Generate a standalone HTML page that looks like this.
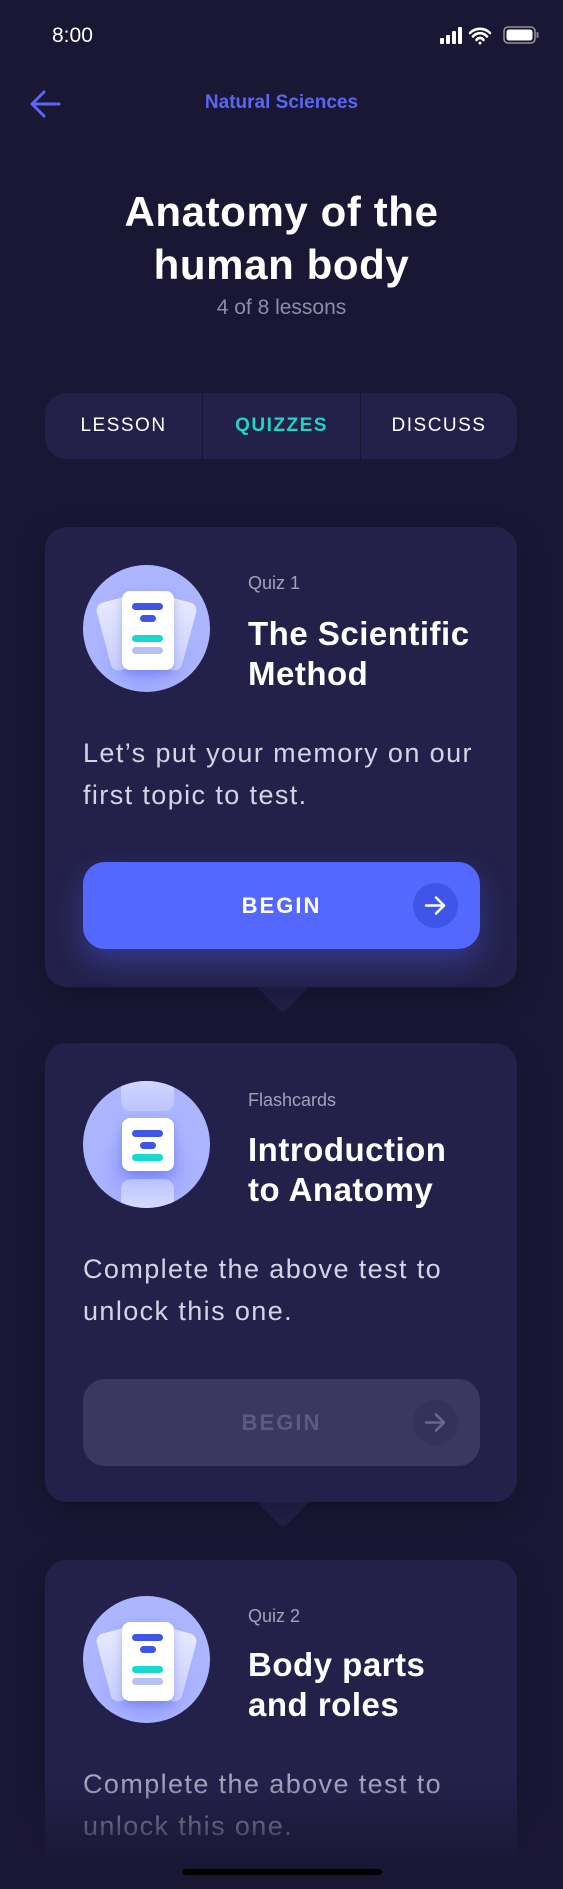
<!DOCTYPE html>
<html style="width:563px;height:1889px;overflow:hidden"><head><meta charset="utf-8"><style>
*{margin:0;padding:0;box-sizing:border-box}
body{width:563px;height:1889px;background:#1a1735;font-family:"Liberation Sans",sans-serif;position:relative;overflow:hidden;color:#fff}
.a{position:absolute}
.card{position:absolute;left:45px;width:472px;background:#23214a;border-radius:22px;box-shadow:0 10px 30px rgba(0,0,0,.25)}
.tri{position:absolute;left:263px;width:40px;height:40px;background:#23214a;transform:rotate(45deg);border-radius:6px}
.circ{position:absolute;left:83px;width:127px;height:127px;border-radius:50%;background:radial-gradient(circle at 50% 70%,#8c98ff 0%,#aab4ff 45%,#aeb8ff 100%)}
.doc{position:absolute;left:39px;width:52px;background:#fff;border-radius:8px;box-shadow:0 4px 10px rgba(60,70,200,.3)}
.bar{position:absolute;height:7px;border-radius:4px}
.side{position:absolute;width:50px;height:70px;background:linear-gradient(#e6e9ff,#c7cdff);border-radius:8px}
.lbl{position:absolute;left:248px;font-size:18px;color:#a3a1b8}
.ttl{position:absolute;left:248px;font-size:33px;letter-spacing:.5px;font-weight:bold;line-height:40px;white-space:nowrap}
.desc{position:absolute;left:83px;font-size:27px;line-height:42px;color:#d6d4e4;white-space:nowrap;letter-spacing:1.4px}
.btn{position:absolute;left:83px;width:397px;height:87px;border-radius:22px;text-align:center;font-size:22px;font-weight:bold;letter-spacing:2px;line-height:87px}
.arr{position:absolute;right:22px;top:21px;width:45px;height:45px;border-radius:50%}
</style></head><body>
<div class="a" style="left:52px;top:24px;font-size:21px;">8:00</div>
<svg class="a" style="left:438px;top:26px" width="104" height="20" viewBox="0 0 104 20">
<rect x="2" y="12" width="4" height="6" rx="1" fill="#fff"/><rect x="8" y="9" width="4" height="9" rx="1" fill="#fff"/><rect x="14" y="5" width="4" height="13" rx="1" fill="#fff"/><rect x="20" y="1" width="4" height="17" rx="1" fill="#fff"/>
<path d="M32 7a14 14 0 0 1 20 0M35 10.5a9 9 0 0 1 14 0M38.5 14a4 4 0 0 1 7 0" stroke="#fff" stroke-width="2.6" fill="none" stroke-linecap="round"/><circle cx="42" cy="17" r="1.5" fill="#fff"/>
<rect x="66" y="1" width="31" height="16" rx="4" stroke="#aaa" stroke-width="1.3" fill="none"/><rect x="68.5" y="3.5" width="26" height="11" rx="2.5" fill="#fff"/><rect x="98.5" y="6" width="2" height="6" rx="1" fill="#888"/>
</svg>
<svg class="a" style="left:28px;top:88px" width="34" height="32" viewBox="0 0 34 32"><path d="M31 16H4M16 4L4 16l12 12" stroke="#5a67f2" stroke-width="3" fill="none" stroke-linecap="round" stroke-linejoin="round"/></svg>
<div class="a" style="left:0;width:563px;top:92px;text-align:center;font-size:19px;font-weight:bold;color:#5a67f2">Natural Sciences</div>
<div class="a" style="left:0;width:563px;top:185px;text-align:center;font-size:42px;letter-spacing:.6px;font-weight:bold;line-height:53px">Anatomy of the<br>human body</div>
<div class="a" style="left:0;width:563px;top:296px;text-align:center;font-size:21px;color:#8e8ca6">4 of 8 lessons</div>
<div class="a" style="left:45px;top:393px;width:472px;height:66px;background:#23214a;border-radius:22px;overflow:hidden;font-size:19px;letter-spacing:1.5px;line-height:66px;text-align:center">
<div class="a" style="left:0;width:157px">LESSON</div>
<div class="a" style="left:157px;width:1px;height:66px;background:#17152e"></div>
<div class="a" style="left:158px;width:157px;color:#1cd6c8;font-weight:bold">QUIZZES</div>
<div class="a" style="left:315px;width:1px;height:66px;background:#17152e"></div>
<div class="a" style="left:316px;width:156px">DISCUSS</div>
</div>

<div class="tri" style="top:965px"></div>
<div class="card" style="top:527px;height:460px"></div>
<div class="circ" style="top:565px"><div class="side" style="left:20px;top:32px;transform:rotate(-15deg)"></div><div class="side" style="left:57px;top:32px;transform:rotate(15deg)"></div>
<div class="doc" style="top:26px;height:79px"><div class="bar" style="left:10px;width:31px;top:12px;background:#3e55e6"></div><div class="bar" style="left:18px;width:16px;top:24px;background:#3e55e6"></div><div class="bar" style="left:10px;width:31px;top:44px;background:#16d8cc"></div><div class="bar" style="left:10px;width:31px;top:56px;background:#b9c0f4"></div></div></div>
<div class="lbl" style="top:573px">Quiz 1</div>
<div class="ttl" style="top:614px">The Scientific<br>Method</div>
<div class="desc" style="top:732px">Let’s put your memory on our<br>first topic to test.</div>
<div class="btn" style="top:862px;background:#5468ff;box-shadow:0 14px 30px rgba(84,104,255,.35)">BEGIN<div class="arr" style="background:#3f55e8"><svg width="45" height="45" viewBox="0 0 45 45" style="position:absolute;left:0;top:0"><path d="M13 22.5h18M23 14.5l8 8-8 8" stroke="#fff" stroke-width="2.5" fill="none" stroke-linecap="round" stroke-linejoin="round"/></svg></div></div>

<div class="tri" style="top:1480px"></div>
<div class="card" style="top:1043px;height:459px"></div>
<div class="circ" style="top:1081px;overflow:hidden"><div class="a" style="left:38px;top:-10px;width:53px;height:40px;background:linear-gradient(#d7dcff,#bcc4ff);border-radius:10px"></div><div class="a" style="left:38px;top:98px;width:53px;height:40px;background:linear-gradient(#bcc4ff,#e0e3ff);border-radius:10px"></div>
<div class="doc" style="top:37px;height:53px"><div class="bar" style="left:10px;width:31px;top:12px;background:#3e55e6"></div><div class="bar" style="left:18px;width:16px;top:24px;background:#3e55e6"></div><div class="bar" style="left:10px;width:31px;top:36px;background:#16d8cc"></div></div></div>
<div class="lbl" style="top:1090px">Flashcards</div>
<div class="ttl" style="top:1130px">Introduction<br>to Anatomy</div>
<div class="desc" style="top:1248px">Complete the above test to<br>unlock this one.</div>
<div class="btn" style="top:1379px;background:#3a3860;color:#5c5a80">BEGIN<div class="arr" style="background:#34325a"><svg width="45" height="45" viewBox="0 0 45 45" style="position:absolute;left:0;top:0"><path d="M13 22.5h18M23 14.5l8 8-8 8" stroke="#6a6890" stroke-width="2.5" fill="none" stroke-linecap="round" stroke-linejoin="round"/></svg></div></div>

<div class="card" style="top:1560px;height:329px;border-radius:22px 22px 0 0"></div>
<div class="circ" style="top:1596px"><div class="side" style="left:20px;top:32px;transform:rotate(-15deg)"></div><div class="side" style="left:57px;top:32px;transform:rotate(15deg)"></div>
<div class="doc" style="top:26px;height:79px"><div class="bar" style="left:10px;width:31px;top:12px;background:#3e55e6"></div><div class="bar" style="left:18px;width:16px;top:24px;background:#3e55e6"></div><div class="bar" style="left:10px;width:31px;top:44px;background:#16d8cc"></div><div class="bar" style="left:10px;width:31px;top:56px;background:#b9c0f4"></div></div></div>
<div class="lbl" style="top:1606px">Quiz 2</div>
<div class="ttl" style="top:1645px">Body parts<br>and roles</div>
<div class="desc" style="top:1763px;color:#a8a6bc">Complete the above test to<br>unlock this one.</div>
<div class="a" style="left:0;top:1780px;width:563px;height:109px;background:linear-gradient(rgba(26,23,53,0),#1a1735 80%)"></div>
<div class="a" style="left:182px;top:1869px;width:200px;height:6px;border-radius:3px;background:#000"></div>
</body></html>
